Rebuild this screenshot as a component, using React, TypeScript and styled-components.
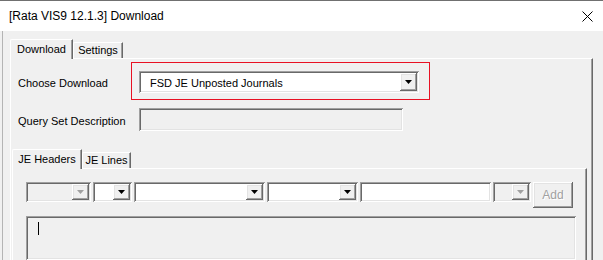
import React from 'react'
import styled, { createGlobalStyle, css } from 'styled-components'

const GlobalStyle = createGlobalStyle`
    html, body {
        margin: 0;
        padding: 0;
        background: #f0f0f0;
    }
`

const sunken = css`
    box-shadow: inset 1px 1px 0 #a0a0a0, inset -1px -1px 0 #ffffff, inset 2px 2px 0 #696969, inset -2px -2px 0 #e3e3e3;
`

const raised = css`
    box-shadow: inset -1px -1px 0 #696969, inset 1px 1px 0 #ffffff, inset -2px -2px 0 #a0a0a0, inset 2px 2px 0 #e3e3e3;
`

const Window = styled.div`
    width: 603px;
    height: 260px;
    overflow: hidden;
    box-sizing: border-box;
    border-top: 1px solid #707070;
    background: #f0f0f0;
    display: flex;
    flex-direction: column;
    font-family: "Liberation Sans", Arial, sans-serif;
    font-size: 11px;
    color: #000;
`

const TitleBar = styled.div`
    height: 30px;
    flex-shrink: 0;
    background: #fff;
    display: flex;
    align-items: center;
    justify-content: space-between;
    padding: 0 10px 0 9px;
`

const Title = styled.span`
    font-size: 12px;
    color: #000;
    padding-bottom: 1px;
`

const CloseIcon = () => (
    <svg width="11" height="11" viewBox="0 0 11 11">
        <path d="M0.5 0.5 L10.5 10.5 M10.5 0.5 L0.5 10.5" stroke="#000" strokeWidth="1" fill="none" />
    </svg>
)

const Body = styled.div`
    flex: 1;
    margin-left: 2px;
    border-left: 1px solid #b4b4b4;
    padding: 8px 0 0 7px;
    display: flex;
    flex-direction: column;
`

const TabStrip = styled.div<{ $height: number }>`
    display: flex;
    align-items: flex-end;
    height: ${p => p.$height}px;
`

const Tab = styled.div<{ $active?: boolean; $width: number }>`
    position: relative;
    box-sizing: border-box;
    width: ${p => p.$width}px;
    height: ${p => (p.$active ? 20 : 16)}px;
    margin-bottom: ${p => (p.$active ? -1 : 0)}px;
    z-index: ${p => (p.$active ? 2 : 1)};
    background: #f0f0f0;
    border-top: 1px solid #fff;
    border-left: 1px solid #fff;
    border-right: 1px solid #696969;
    border-top-left-radius: 2px;
    box-shadow: inset -1px 0 0 #a0a0a0;
    display: flex;
    align-items: flex-start;
    justify-content: center;
    padding-top: ${p => (p.$active ? 3 : 1)}px;
    white-space: nowrap;
`

const TabPage = styled.div<{ $width: number }>`
    box-sizing: border-box;
    width: ${p => p.$width}px;
    flex: 1;
    border-top: 1px solid #fff;
    border-left: 1px solid #fff;
    border-right: 1px solid #696969;
    box-shadow: inset -1px 0 0 #a0a0a0;
    display: flex;
    flex-direction: column;
`

const FieldRow = styled.div<{ $top: number }>`
    display: flex;
    align-items: center;
    padding-left: 7px;
    margin-top: ${p => p.$top}px;
`

const Label = styled.span`
    width: 121px;
    padding-top: 2px;
    flex-shrink: 0;
`

const Highlight = styled.div`
    position: relative;
`

const RedFrame = styled.span`
    position: absolute;
    top: -9px;
    left: -8px;
    right: -11px;
    bottom: -7px;
    border: 1px solid #e81123;
    pointer-events: none;
`

const Combo = styled.div<{ $width: number; $height: number; $disabled?: boolean }>`
    position: relative;
    box-sizing: border-box;
    width: ${p => p.$width}px;
    height: ${p => p.$height}px;
    background: ${p => (p.$disabled ? '#f0f0f0' : '#fff')};
    ${sunken}
    display: flex;
    align-items: center;
    padding: 2px;
`

const ComboText = styled.span`
    flex: 1;
    padding-left: 9px;
    padding-top: 1px;
`

const DropButton = styled.div<{ $width: number }>`
    box-sizing: border-box;
    width: ${p => p.$width}px;
    height: 100%;
    margin-left: auto;
    background: #f0f0f0;
    ${raised}
    display: flex;
    align-items: center;
    justify-content: center;
`

const Arrow = ({ disabled }: { disabled?: boolean }) => (
    <svg width="7" height="4" viewBox="0 0 7 4">
        <polygon points="0,0 7,0 3.5,4" fill={disabled ? '#a0a0a0' : '#000'} />
    </svg>
)

const TextBox = styled.div<{ $width: number; $height: number; $white?: boolean }>`
    box-sizing: border-box;
    width: ${p => p.$width}px;
    height: ${p => p.$height}px;
    background: ${p => (p.$white ? '#fff' : '#f0f0f0')};
    ${sunken}
`

const InnerTabs = styled.div`
    margin: 17px 0 0 1px;
    flex: 1;
    display: flex;
    flex-direction: column;
`

const Toolbar = styled.div`
    display: flex;
    align-items: flex-start;
    gap: 2px;
    padding: 13px 0 0 13px;
`

const AddButton = styled.div`
    box-sizing: border-box;
    width: 40px;
    height: 26px;
    background: #f0f0f0;
    ${raised}
    display: flex;
    align-items: center;
    justify-content: center;
    color: #a0a0a0;
    text-shadow: 1px 1px 0 #fff;
    font-size: 12px;
`

const Memo = styled.div`
    box-sizing: border-box;
    margin: 8px 0 0 13px;
    width: 550px;
    flex: 1;
    background: #f0f0f0;
    ${sunken}
    padding: 6px 0 0 12px;
`

const Caret = styled.span`
    display: block;
    width: 1px;
    height: 13px;
    background: #000;
`

const ToolCombo = ({ width, disabled }: { width: number; disabled?: boolean }) => (
    <Combo $width={width} $height={20} $disabled={disabled}>
        <DropButton $width={17}>
            <Arrow disabled={disabled} />
        </DropButton>
    </Combo>
)

const App = () => {
    return (
        <Window>
            <GlobalStyle />
            <TitleBar>
                <Title>[Rata VIS9 12.1.3] Download</Title>
                <CloseIcon />
            </TitleBar>
            <Body>
                <TabStrip $height={19}>
                    <Tab $active $width={63}>Download</Tab>
                    <Tab $width={50}>Settings</Tab>
                </TabStrip>
                <TabPage $width={583}>
                    <FieldRow $top={12}>
                        <Label>Choose Download</Label>
                        <Highlight>
                            <Combo $width={280} $height={22}>
                                <ComboText>FSD JE Unposted Journals</ComboText>
                                <DropButton $width={17}>
                                    <Arrow />
                                </DropButton>
                            </Combo>
                            <RedFrame />
                        </Highlight>
                    </FieldRow>
                    <FieldRow $top={15}>
                        <Label>Query Set Description</Label>
                        <TextBox $width={264} $height={23} />
                    </FieldRow>
                    <InnerTabs>
                        <TabStrip $height={20}>
                            <Tab $active $width={70}>JE Headers</Tab>
                            <Tab $width={49}>JE Lines</Tab>
                        </TabStrip>
                        <TabPage $width={575}>
                            <Toolbar>
                                <ToolCombo width={65} disabled />
                                <ToolCombo width={39} />
                                <ToolCombo width={131} />
                                <ToolCombo width={91} />
                                <TextBox $width={131} $height={20} $white />
                                <ToolCombo width={38} disabled />
                                <AddButton>Add</AddButton>
                            </Toolbar>
                            <Memo>
                                <Caret />
                            </Memo>
                        </TabPage>
                    </InnerTabs>
                </TabPage>
            </Body>
        </Window>
    )
}

export default App
